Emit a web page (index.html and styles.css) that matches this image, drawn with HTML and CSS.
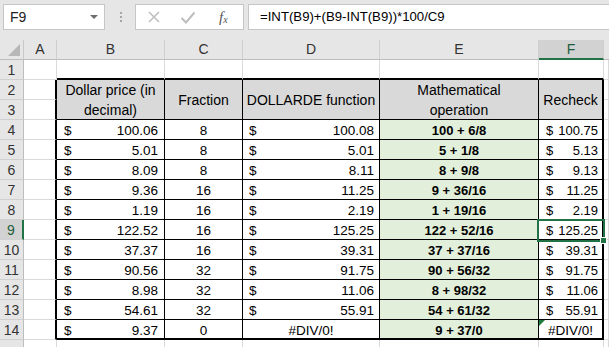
FILE: index.html
```html
<!DOCTYPE html>
<html>
<head>
<meta charset="utf-8">
<link rel="stylesheet" href="styles.css">
</head>
<body>
<div class="toolbar">
  <div class="namebox"><span class="nb-text">F9</span><span class="caret"></span></div>
  <div class="grip"><i></i><i></i><i></i></div>
  <div class="fxbox">
    <svg class="ico-x" width="12" height="12" viewBox="0 0 12 12"><path d="M1 1L11 11M11 1L1 11" stroke="#bdbdbd" stroke-width="1.5" fill="none"/></svg>
    <svg class="ico-ok" width="16" height="13" viewBox="0 0 16 13"><path d="M1.5 7L6 11.5L14.5 1.5" stroke="#bdbdbd" stroke-width="2" fill="none"/></svg>
    <span class="fx">f<sub>x</sub></span>
  </div>
  <div class="formula">=INT(B9)+(B9-INT(B9))*100/C9</div>
</div>

<div class="sheet">
  <div class="corner"><svg width="12" height="12" viewBox="0 0 12 12"><polygon points="12,0 12,12 0,12" fill="#b7b7b7"/></svg></div>
  <div class="ch">A</div>
  <div class="ch">B</div>
  <div class="ch">C</div>
  <div class="ch">D</div>
  <div class="ch">E</div>
  <div class="ch sel">F</div>
  <div class="ch last"></div>

  <div class="rh">1</div>
  <div class="c"></div>
  <div class="c top"></div>
  <div class="c top"></div>
  <div class="c top"></div>
  <div class="c top"></div>
  <div class="c top"></div>
  <div class="c"></div>

  <div class="rh">2</div>
  <div class="c la"></div>
  <div class="c t hd">Dollar price (in<br>decimal)</div>
  <div class="c t hd">Fraction</div>
  <div class="c t hd">DOLLARDE function</div>
  <div class="c t hd">Mathematical<br>operation</div>
  <div class="c t hd rf">Recheck</div>
  <div class="c"></div>

  <div class="rh">3</div>
  <div class="c la"></div>
  <div class="c"></div>

  <div class="rh">4</div><div class="c la"></div>
  <div class="c t acc b"><span>$</span><span>100.06</span></div>
  <div class="c t ctr">8</div>
  <div class="c t acc d"><span>$</span><span>100.08</span></div>
  <div class="c t op">100 + 6/8</div>
  <div class="c t acc f rf"><span>$</span><span>100.75</span></div>
  <div class="c"></div>

  <div class="rh">5</div><div class="c la"></div>
  <div class="c t acc b"><span>$</span><span>5.01</span></div>
  <div class="c t ctr">8</div>
  <div class="c t acc d"><span>$</span><span>5.01</span></div>
  <div class="c t op">5 + 1/8</div>
  <div class="c t acc f rf"><span>$</span><span>5.13</span></div>
  <div class="c"></div>

  <div class="rh">6</div><div class="c la"></div>
  <div class="c t acc b"><span>$</span><span>8.09</span></div>
  <div class="c t ctr">8</div>
  <div class="c t acc d"><span>$</span><span>8.11</span></div>
  <div class="c t op">8 + 9/8</div>
  <div class="c t acc f rf"><span>$</span><span>9.13</span></div>
  <div class="c"></div>

  <div class="rh">7</div><div class="c la"></div>
  <div class="c t acc b"><span>$</span><span>9.36</span></div>
  <div class="c t ctr">16</div>
  <div class="c t acc d"><span>$</span><span>11.25</span></div>
  <div class="c t op">9 + 36/16</div>
  <div class="c t acc f rf"><span>$</span><span>11.25</span></div>
  <div class="c"></div>

  <div class="rh">8</div><div class="c la"></div>
  <div class="c t acc b"><span>$</span><span>1.19</span></div>
  <div class="c t ctr">16</div>
  <div class="c t acc d"><span>$</span><span>2.19</span></div>
  <div class="c t op">1 + 19/16</div>
  <div class="c t acc f rf"><span>$</span><span>2.19</span></div>
  <div class="c"></div>

  <div class="rh rsel">9</div><div class="c la"></div>
  <div class="c t acc b"><span>$</span><span>122.52</span></div>
  <div class="c t ctr">16</div>
  <div class="c t acc d"><span>$</span><span>125.25</span></div>
  <div class="c t op">122 + 52/16</div>
  <div class="c t acc f rf active"><span>$</span><span>125.25</span><i class="handle"></i></div>
  <div class="c"></div>

  <div class="rh">10</div><div class="c la"></div>
  <div class="c t acc b"><span>$</span><span>37.37</span></div>
  <div class="c t ctr">16</div>
  <div class="c t acc d"><span>$</span><span>39.31</span></div>
  <div class="c t op">37 + 37/16</div>
  <div class="c t acc f rf"><span>$</span><span>39.31</span></div>
  <div class="c"></div>

  <div class="rh">11</div><div class="c la"></div>
  <div class="c t acc b"><span>$</span><span>90.56</span></div>
  <div class="c t ctr">32</div>
  <div class="c t acc d"><span>$</span><span>91.75</span></div>
  <div class="c t op">90 + 56/32</div>
  <div class="c t acc f rf"><span>$</span><span>91.75</span></div>
  <div class="c"></div>

  <div class="rh">12</div><div class="c la"></div>
  <div class="c t acc b"><span>$</span><span>8.98</span></div>
  <div class="c t ctr">32</div>
  <div class="c t acc d"><span>$</span><span>11.06</span></div>
  <div class="c t op">8 + 98/32</div>
  <div class="c t acc f rf"><span>$</span><span>11.06</span></div>
  <div class="c"></div>

  <div class="rh">13</div><div class="c la"></div>
  <div class="c t acc b"><span>$</span><span>54.61</span></div>
  <div class="c t ctr">32</div>
  <div class="c t acc d"><span>$</span><span>55.91</span></div>
  <div class="c t op">54 + 61/32</div>
  <div class="c t acc f rf"><span>$</span><span>55.91</span></div>
  <div class="c"></div>

  <div class="rh">14</div><div class="c la"></div>
  <div class="c t bt acc b"><span>$</span><span>9.37</span></div>
  <div class="c t bt ctr">0</div>
  <div class="c t bt ctr">#DIV/0!</div>
  <div class="c t bt op">9 + 37/0</div>
  <div class="c t bt ctr rf err">#DIV/0!<i class="tri"></i></div>
  <div class="c"></div>

  <div class="rh"></div>
  <div class="c"></div><div class="c"></div><div class="c"></div><div class="c"></div><div class="c"></div><div class="c"></div><div class="c"></div>
</div>
</body>
</html>
```

FILE: styles.css
```css
html, body {
  margin: 0;
  padding: 0;
  width: 609px;
  height: 347px;
  overflow: hidden;
  background: #ffffff;
  font-family: "Liberation Sans", Arial, sans-serif;
  font-size: 13px;
  color: #000;
}

.toolbar {
  height: 40px;
  box-sizing: border-box;
  background: #e6e6e6;
  display: flex;
  align-items: flex-start;
  padding: 4px 0 0 3px;
}

.namebox {
  width: 102px;
  height: 26px;
  box-sizing: border-box;
  background: #fff;
  border: 1px solid #c6c6c6;
  display: flex;
  align-items: center;
  justify-content: space-between;
  padding: 0 6px 0 6px;
  font-size: 14px;
}
.nb-text { color: #222; }
.caret {
  width: 0;
  height: 0;
  border-left: 4px solid transparent;
  border-right: 4px solid transparent;
  border-top: 4px solid #6d6d6d;
}

.grip {
  margin-left: 15px;
  padding-top: 8px;
  display: flex;
  flex-direction: column;
  gap: 2px;
}
.grip i {
  display: block;
  width: 2px;
  height: 2px;
  background: #a6a6a6;
}

.fxbox {
  margin-left: 13px;
  width: 109px;
  height: 26px;
  box-sizing: border-box;
  background: #fff;
  border: 1px solid #c6c6c6;
  display: flex;
  align-items: center;
  padding-left: 12px;
}
.ico-x { margin-right: 20px; }
.ico-ok { margin-right: 23px; }
.fx {
  font-family: "Liberation Serif", serif;
  font-style: italic;
  font-size: 15px;
  color: #555;
  line-height: 1;
}
.fx sub { font-size: 10px; vertical-align: -1px; }

.formula {
  margin-left: 4px;
  flex: 1;
  height: 26px;
  box-sizing: border-box;
  background: #fff;
  border: 1px solid #c6c6c6;
  border-right: none;
  padding-left: 11px;
  line-height: 24px;
  font-size: 13.2px;
  color: #000;
  white-space: nowrap;
}

.sheet {
  display: grid;
  grid-template-columns: 24px 33px 108px 78px 137px 159px 65px 1fr;
  grid-auto-rows: 20px;
}

.sheet > div {
  box-sizing: border-box;
  white-space: nowrap;
  overflow: hidden;
}

.corner {
  background: #e6e6e6;
  border-right: 1px solid #c8c8c8;
  border-bottom: 1px solid #bdbdbd;
  display: flex;
  align-items: flex-end;
  justify-content: flex-end;
  padding: 0 3px 3px 0;
}

.ch {
  background: #e6e6e6;
  border-right: 1px solid #cfcfcf;
  border-bottom: 1px solid #bdbdbd;
  text-align: center;
  line-height: 19px;
  font-size: 14px;
  color: #333;
}
.ch.sel {
  background: #d2d2d2;
  color: #1f5c3b;
  border-bottom: 2px solid #217346;
  line-height: 18px;
}
.ch.last { border-right: none; }

.rh {
  background: #e6e6e6;
  border-right: 1px solid #bdbdbd;
  border-bottom: 1px solid #d0d0d0;
  text-align: center;
  line-height: 20px;
  font-size: 14px;
  color: #333;
}
.rh.rsel {
  background: #d2d2d2;
  color: #1f5c3b;
  border-right: 2px solid #217346;
}

.c {
  border-right: 1px solid #dadada;
  border-bottom: 1px solid #dadada;
  line-height: 20px;
  padding-top: 1px;
}
.c.top { border-bottom: 2px solid #000; }
.c.la { border-right: 2px solid #000; }

.c.t {
  border-right: 1px solid #000;
  border-bottom: 1px solid #000;
}
.c.t.rf { border-right: 2px solid #000; }
.c.t.bt { border-bottom: 2px solid #000; }

.hd {
  grid-row: span 2;
  background: #d9d9d9;
  display: flex;
  align-items: center;
  justify-content: center;
  text-align: center;
  font-size: 14px;
  padding-top: 0 !important;
}

.acc {
  display: flex;
  justify-content: space-between;
  font-size: 13.5px;
}
.acc.b { padding-left: 7px; padding-right: 6px; }
.acc.d { padding-left: 6px; padding-right: 5px; }
.acc.f { padding-left: 7px; padding-right: 4px; font-size: 13px; }

.ctr { text-align: center; font-size: 13.5px; }

.op {
  background: #e2efda;
  font-weight: bold;
  text-align: center;
}

.sheet > .active {
  position: relative;
  overflow: visible;
}
.active::after {
  content: "";
  position: absolute;
  left: -2px;
  top: -1px;
  right: -3px;
  bottom: -3px;
  border: 2px solid #217346;
}
.handle {
  position: absolute;
  right: -5px;
  bottom: -5px;
  width: 5px;
  height: 5px;
  background: #217346;
  border: 1px solid #fff;
  z-index: 2;
}

.sheet > .err { position: relative; }
.tri {
  position: absolute;
  left: 0;
  top: 0;
  width: 0;
  height: 0;
  border-top: 6px solid #1e7b3c;
  border-right: 6px solid transparent;
}
```
